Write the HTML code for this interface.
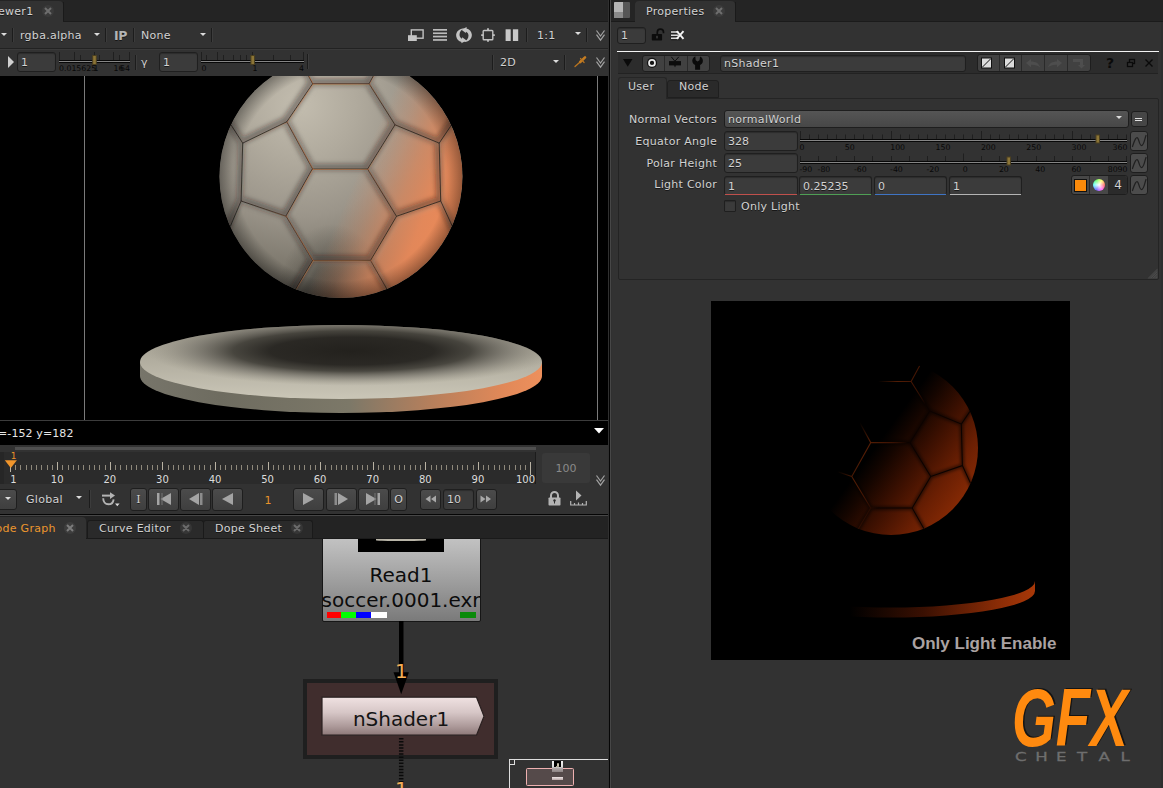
<!DOCTYPE html>
<html>
<head>
<meta charset="utf-8">
<title>Nuke</title>
<style>
html,body{margin:0;padding:0;}
body{width:1163px;height:788px;overflow:hidden;background:#323232;position:relative;font-family:"DejaVu Sans","Liberation Sans",sans-serif;font-size:11px;letter-spacing:0.28px;color:#d2d2d2;}
.abs{position:absolute;}
.t{position:absolute;white-space:nowrap;line-height:14px;text-shadow:0 1px 0 rgba(0,0,0,.55);}
.in{position:absolute;box-sizing:border-box;background:#3b3b3b;border:1px solid #1f1f1f;border-radius:3px;box-shadow:inset 0 1px 1px rgba(0,0,0,.25);}
.btn{position:absolute;box-sizing:border-box;background:linear-gradient(#4b4b4b,#3f3f3f);border:1px solid #1e1e1e;border-radius:3px;}
.sep{position:absolute;width:1px;background:#1c1c1c;box-shadow:1px 0 0 #3c3c3c;}
.dd{position:absolute;width:0;height:0;border-left:3px solid transparent;border-right:3px solid transparent;border-top:3.4px solid #dcdcdc;}
svg{position:absolute;overflow:visible;letter-spacing:0;}
</style>
</head>
<body>

<!-- ================= LEFT: VIEWER ================= -->
<div class="abs" id="vtabbar" style="left:0;top:0;width:609px;height:22px;background:#242424;"></div>
<div class="abs" id="vtab" style="left:-4px;top:1px;width:67px;height:21px;background:#323232;border-radius:0 4px 0 0;"></div>
<div class="abs" style="left:63px;top:2px;width:1px;height:20px;background:#1a1a1a;"></div>
<div class="abs" style="left:63px;top:21px;width:545px;height:1px;background:#1b1b1b;"></div>
<div class="t" style="left:-2px;top:5px;">ewer1</div>
<svg style="left:41px;top:4px;" width="14" height="14" viewBox="0 0 14 14"><circle cx="7" cy="7" r="6" fill="#3a3a3a"/><path d="M4 4l6 6M10 4l-6 6" stroke="#6e6e6e" stroke-width="2"/></svg>

<!-- toolbar rows -->
<div class="abs" style="left:0;top:48px;width:609px;height:1px;background:#222;"></div>
<div class="abs" style="left:0;top:49px;width:609px;height:1px;background:#3a3a3a;"></div>

<div id="tb1">
<!-- row 1 -->
<div class="dd" style="left:0.500px;top:32.500px;"></div>
<div class="sep" style="left:12px;top:28px;height:14px;"></div>
<div class="t" style="left:20px;top:28.800px;">rgba.alpha</div>
<div class="dd" style="left:93.500px;top:32.500px;"></div>
<div class="sep" style="left:105px;top:28px;height:14px;"></div>
<div class="t" style="left:114px;top:28.800px;font-weight:bold;font-size:12.5px;color:#b4b4b4;letter-spacing:-0.5px;">IP</div>
<div class="sep" style="left:133px;top:28px;height:14px;"></div>
<div class="t" style="left:141px;top:28.800px;">None</div>
<div class="dd" style="left:199.500px;top:32.500px;"></div>
<div class="sep" style="left:211px;top:28px;height:14px;"></div>

<!-- right icons row 1 -->
<svg style="left:408px;top:27px;" width="112" height="17" viewBox="408 27 112 17">
  <!-- proxy icon -->
  <rect x="411.300" y="29.900" width="11.800" height="8.300" fill="none" stroke="#c2c2c2" stroke-width="1.400"/>
  <rect x="408" y="35.200" width="8.800" height="5.800" fill="#c4c4c4"/>
  <!-- lines icon -->
  <g fill="#bcbcbc"><rect x="433" y="29" width="14" height="1.700"/><rect x="433" y="32.400" width="14" height="1.700"/><rect x="433" y="35.700" width="14" height="1.700"/><rect x="433" y="39.100" width="14" height="1.700"/></g>
  <!-- refresh icon -->
  <g fill="#c4c4c4">
    <path d="M464.600 28.300C459 28.300 455.700 32 456.200 36.200C456.600 39.200 458.700 41.300 461.500 42L461.300 43.300L466.600 40.600L462.200 37.300L462 38.700C460.400 38 459.500 36.600 459.500 34.800C459.500 31.800 461.500 29.300 464.600 28.300Z"/>
    <path d="M463.400 42.100C469 42.100 472.300 38.400 471.800 34.200C471.400 31.200 469.300 29.100 466.500 28.400L466.700 27.100L461.400 29.800L465.800 33.100L466 31.700C467.600 32.400 468.500 33.800 468.500 35.600C468.500 38.600 466.500 41.100 463.400 42.100Z"/>
  </g>
  <!-- crosshair square -->
  <rect x="483.200" y="30.500" width="9.600" height="9.200" rx="0.800" fill="none" stroke="#c2c2c2" stroke-width="1.400"/>
  <path d="M488 28.300v2M488 39.700v2M481.200 35.100h2M492.800 35.100h2" stroke="#c2c2c2" stroke-width="1.800"/>
  <!-- pause -->
  <rect x="505.600" y="29.300" width="5.100" height="11.700" fill="#c9c9c9"/>
  <rect x="512.900" y="29.300" width="5.300" height="11.700" fill="#c9c9c9"/>
</svg>
<div class="sep" style="left:526px;top:28px;height:14px;"></div>
<div class="t" style="left:537px;top:28.800px;">1:1</div>
<div class="dd" style="left:574.600px;top:32px;"></div>
<div class="sep" style="left:586px;top:28px;height:14px;"></div>
<svg style="left:595.500px;top:30px;" width="9" height="11" viewBox="0 0 9 11"><path d="M0.500 0.500L4.500 6L8.500 0.500M0.500 4.700L4.500 10.200L8.500 4.700" fill="none" stroke="#a2a2a2" stroke-width="1.200"/></svg>
</div>
<div id="tb2">
<!-- row 2 -->
<svg style="left:8px;top:56px;" width="6" height="12" viewBox="0 0 6 12"><path d="M0 0L6 6L0 12Z" fill="#d0d0d0"/></svg>
<div class="in" style="left:17px;top:52px;width:39px;height:20px;"></div>
<div class="t" style="left:21px;top:56px;letter-spacing:0;">1</div>
<svg style="left:58px;top:51px;" width="74" height="22" viewBox="58 51 74 22">
  <path d="M59.500 52v8M74.500 52v8M80.500 55v5M94.500 52v8M99.500 55v5M113.500 52v8M119.500 55v5M129.500 52v8" stroke="#1f1f1f" stroke-width="1"/>
  <rect x="59" y="60" width="71" height="3" fill="#080808"/>
  <rect x="59" y="61" width="71" height="1" fill="#858585"/>
  <rect x="92.700" y="55.500" width="3.600" height="9" fill="#8c7536" stroke="#4a3f20" stroke-width="1"/>
  <g font-family="DejaVu Sans, sans-serif" font-size="7.800" fill="#080808">
    <text x="59" y="71.200">0.015625</text><text x="93.500" y="71.200">1</text><text x="113.500" y="71.200">16</text><text x="130" y="71.200" text-anchor="end">64</text>
  </g>
</svg>
<div class="sep" style="left:135px;top:55px;height:15px;"></div>
<div class="t" style="left:141px;top:56px;">γ</div>
<div class="in" style="left:159px;top:52px;width:39px;height:20px;"></div>
<div class="t" style="left:163px;top:56px;letter-spacing:0;">1</div>
<svg style="left:200px;top:51px;" width="108" height="22" viewBox="200 51 108 22">
  <path d="M201.500 52v8M206.500 55v5M217.500 52v8M223.500 55v5M233.500 55v5M240.500 55v5M246.500 55v5M252.500 52v8M273.500 55v5M290.500 55v5M303.500 52v8" stroke="#1f1f1f" stroke-width="1"/>
  <rect x="201" y="60" width="103" height="3" fill="#080808"/>
  <rect x="201" y="61" width="103" height="1" fill="#858585"/>
  <rect x="250.900" y="55.500" width="3.600" height="9" fill="#8c7536" stroke="#4a3f20" stroke-width="1"/>
  <g font-family="DejaVu Sans, sans-serif" font-size="7.800" fill="#080808">
    <text x="201.500" y="71.200">0</text><text x="252.500" y="71.200">1</text><text x="304" y="71.200" text-anchor="end">4</text>
  </g>
</svg>
<div class="sep" style="left:307px;top:54px;height:15px;"></div>

<div class="sep" style="left:492px;top:55px;height:15px;"></div>
<div class="t" style="left:500px;top:56px;">2D</div>
<div class="dd" style="left:552.500px;top:59.800px;"></div>
<div class="sep" style="left:564px;top:55px;height:15px;"></div>
<svg style="left:574px;top:56px;" width="13" height="12" viewBox="574 56 13 12"><path d="M575 66.600L581 61.200" stroke="#b87420" stroke-width="1.300" stroke-linecap="round"/><path d="M580.200 62L585 57.400" stroke="#c47c22" stroke-width="2.600" stroke-linecap="round"/><path d="M580.600 58.600L584 62.400" stroke="#b87420" stroke-width="1.400" stroke-linecap="round"/></svg>
<svg style="left:595.500px;top:56.800px;" width="9" height="11" viewBox="0 0 9 11"><path d="M0.500 0.500L4.500 6L8.500 0.500M0.500 4.700L4.500 10.200L8.500 4.700" fill="none" stroke="#a2a2a2" stroke-width="1.200"/></svg>
</div>

<!-- viewer -->
<div class="abs" id="viewer" style="left:0;top:76px;width:608px;height:369px;background:#000;"></div>
<div id="viewerimg">
<svg style="left:0;top:76px;" width="608" height="345" viewBox="0 76 608 345">
<defs>
  <clipPath id="vclip"><rect x="0" y="76" width="608" height="345"/></clipPath>
  <clipPath id="ballclip"><circle cx="341" cy="176.5" r="121.5"/></clipPath>
  <radialGradient id="ballbase" cx="300" cy="104" r="225" gradientUnits="userSpaceOnUse">
    <stop offset="0" stop-color="#c3bdaf"/>
    <stop offset="0.25" stop-color="#b0aa9d"/>
    <stop offset="0.5" stop-color="#9b958a"/>
    <stop offset="0.72" stop-color="#7e796e"/>
    <stop offset="0.9" stop-color="#59554e"/>
    <stop offset="1" stop-color="#423f39"/>
  </radialGradient>
  <linearGradient id="ballorange" x1="352" y1="186" x2="455" y2="230" gradientUnits="userSpaceOnUse">
    <stop offset="0" stop-color="#e98a5b" stop-opacity="0"/>
    <stop offset="0.2" stop-color="#e98a5b" stop-opacity="0.25"/>
    <stop offset="0.45" stop-color="#ea8a5a" stop-opacity="0.65"/>
    <stop offset="0.7" stop-color="#ec8a59" stop-opacity="0.92"/>
    <stop offset="1" stop-color="#ee8b58" stop-opacity="1"/>
  </linearGradient>
  <radialGradient id="ballrim" cx="341" cy="176.5" r="121.5" gradientUnits="userSpaceOnUse">
    <stop offset="0.86" stop-color="#000" stop-opacity="0"/>
    <stop offset="1" stop-color="#000" stop-opacity="0.35"/>
  </radialGradient>
  <radialGradient id="balldark" cx="332" cy="296" r="72" gradientUnits="userSpaceOnUse" gradientTransform="translate(332 296) scale(0.75 1) translate(-332 -296)">
    <stop offset="0" stop-color="#2f2d28" stop-opacity="0.6"/>
    <stop offset="0.5" stop-color="#2f2d28" stop-opacity="0.32"/>
    <stop offset="1" stop-color="#2f2d28" stop-opacity="0"/>
  </radialGradient>
  <filter id="b2" x="-20%" y="-20%" width="140%" height="140%"><feGaussianBlur stdDeviation="2.2"/></filter>
  <filter id="b3" x="-20%" y="-20%" width="140%" height="140%"><feGaussianBlur stdDeviation="2.800"/></filter>
  <filter id="b1" x="-20%" y="-20%" width="140%" height="140%"><feGaussianBlur stdDeviation="0.5"/></filter>
  <linearGradient id="seamcol" x1="230" y1="0" x2="460" y2="0" gradientUnits="userSpaceOnUse">
    <stop offset="0.05" stop-color="#e0783c" stop-opacity="0"/><stop offset="0.18" stop-color="#e0783c" stop-opacity="0.15"/><stop offset="0.32" stop-color="#e27a3c" stop-opacity="0.5"/><stop offset="0.55" stop-color="#e27a3c" stop-opacity="0.55"/><stop offset="0.68" stop-color="#d07038" stop-opacity="0.15"/><stop offset="0.78" stop-color="#d07038" stop-opacity="0"/>
  </linearGradient>
  <radialGradient id="discshadow" cx="352" cy="351" r="205" gradientUnits="userSpaceOnUse" gradientTransform="translate(352 351) scale(1 0.17) translate(-352 -351)">
    <stop offset="0" stop-color="#23211d" stop-opacity="1"/>
    <stop offset="0.4" stop-color="#282622" stop-opacity="0.98"/>
    <stop offset="0.58" stop-color="#3a3832" stop-opacity="0.88"/>
    <stop offset="0.78" stop-color="#64615a" stop-opacity="0.5"/>
    <stop offset="1" stop-color="#8a867a" stop-opacity="0"/>
  </radialGradient>
  <linearGradient id="disctop" x1="0" y1="325" x2="0" y2="399" gradientUnits="userSpaceOnUse">
    <stop offset="0" stop-color="#9c988b"/><stop offset="0.45" stop-color="#b0ac9e"/><stop offset="1" stop-color="#cac6b7"/>
  </linearGradient>
  <linearGradient id="discside" x1="140" y1="0" x2="542" y2="0" gradientUnits="userSpaceOnUse">
    <stop offset="0" stop-color="#77756a"/><stop offset="0.2" stop-color="#6e6c60"/><stop offset="0.52" stop-color="#7c7868"/><stop offset="0.72" stop-color="#b57f5c"/><stop offset="0.9" stop-color="#e08858"/><stop offset="1" stop-color="#ee905c"/>
  </linearGradient>
  <linearGradient id="seamcolp" x1="240" y1="150" x2="460" y2="250" gradientUnits="userSpaceOnUse">
    <stop offset="0.2" stop-color="#7a2a06" stop-opacity="0"/><stop offset="0.3" stop-color="#8a3008" stop-opacity="0.6"/><stop offset="0.4" stop-color="#5a1c04" stop-opacity="0.7"/><stop offset="0.5" stop-color="#0c0200" stop-opacity="0.95"/><stop offset="1" stop-color="#0a0200" stop-opacity="1"/>
  </linearGradient>
  <clipPath id="disctopclip"><ellipse cx="341" cy="362" rx="201" ry="37"/></clipPath>
</defs>
<g clip-path="url(#vclip)">
  <!-- disc -->
  <path d="M140 362 L140 376 A201 37 0 0 0 542 376 L542 362 Z" fill="url(#discside)"/>
  <ellipse cx="341" cy="362" rx="201" ry="37" fill="url(#disctop)"/>
  <g clip-path="url(#disctopclip)"><ellipse cx="352" cy="351" rx="205" ry="35" fill="url(#discshadow)"/></g>
  <!-- ball -->
  <circle cx="341" cy="176.5" r="121.5" fill="url(#ballbase)"/>
  <g clip-path="url(#ballclip)">
    <circle cx="341" cy="176.5" r="121.5" fill="url(#balldark)"/>
    <circle cx="341" cy="176.5" r="121.5" fill="url(#ballorange)"/>
    <g id="seams" fill="none" stroke-linejoin="round" stroke-linecap="round">
      <g stroke="#201d19" stroke-opacity="0.45" stroke-width="6.500" filter="url(#b3)" transform="translate(-1.200 -1.500)">
        <path id="sp" d="M312.7 169 L367.6 169 L396.5 216.3 L370.6 260.4 L312.7 260.4 L286.2 216.3 Z M312.7 169 L286.8 121.8 L312.7 83.7 L369.1 83.7 L395 124.8 L367.6 169 M312.7 83.7 L300 60 M369.1 83.7 L382 60 M286.8 121.8 L242.7 143.1 L241.1 201 L286.2 216.3 M395 124.8 L439.2 143.1 L440.7 201 L396.5 216.3 M242.7 143.1 L232 126.4 Q226 118 222 112 M241.1 201 L232 222.3 Q228 232 226 238 M439.2 143.1 L450.5 126.4 L456 117 M440.7 201 L450.5 222.3 L455 232 M312.7 260.4 L299 283.3 L294 292 M370.6 260.4 L382.8 281.8 L388 291"/>
      </g>
      <use href="#sp" transform="translate(1.800 2)" stroke="#ddd6c8" stroke-opacity="0.2" stroke-width="3" filter="url(#b2)"/>
      <use href="#sp" stroke="#26221d" stroke-width="1" stroke-opacity="0.8" filter="url(#b1)"/>
      <use href="#sp" transform="translate(0.600 0.400)" stroke="url(#seamcol)" stroke-width="0.900" filter="url(#b1)"/>
    </g>
    <circle cx="341" cy="176.5" r="121.5" fill="url(#ballrim)"/>
  </g>
  <!-- format lines -->
  <rect x="84" y="76" width="1" height="345" fill="#7a7a7a"/>
  <rect x="597" y="76" width="1" height="345" fill="#7a7a7a"/>
  <rect x="0" y="420" width="608" height="1" fill="#3c3c3c"/>
</g>
</svg>
<div class="t" style="left:-2px;top:426.500px;color:#e6e6e6;text-shadow:none;letter-spacing:0.1px;">=-152 y=182</div>
<svg style="left:594px;top:428px;" width="10" height="6" viewBox="0 0 10 6"><path d="M0 0H10L5 5.5Z" fill="#fff"/></svg>
</div>

<!-- timeline -->
<div id="timeline">
<div class="abs" style="left:0;top:445px;width:608px;height:43px;background:#323232;"></div>
<div class="abs" style="left:0;top:452px;width:536px;height:32px;background:#2b2b2b;"></div>
<div class="abs" style="left:0;top:452px;width:4px;height:32px;background:#262626;"></div>
<div class="abs" style="left:15px;top:447px;width:521px;height:3px;background:#4f4f4f;"></div>
<div class="abs" style="left:535px;top:452px;width:1px;height:32px;background:#1c1c1c;"></div>
<svg style="left:0;top:445px;" width="540" height="43" viewBox="0 445 540 43">
  <path d="M15.5  465v5M20.5  465v5M26.5  465v5M31.5  465v5M36.5  465v5M41.5  465v5M47.5  465v5M52.5  465v5M62.5  465v5M68.5  465v5M73.5  465v5M78.5  465v5M83.5  465v5M89.5  465v5M94.5  465v5M99.5  465v5M105.5  465v5M115.5  465v5M120.5  465v5M126.5  465v5M131.5  465v5M136.5  465v5M141.5  465v5M147.5  465v5M152.5  465v5M157.5  465v5M168.5  465v5M173.5  465v5M178.5  465v5M183.5  465v5M189.5  465v5M194.5  465v5M199.5  465v5M204.5  465v5M210.5  465v5M220.5  465v5M225.5  465v5M231.5  465v5M236.5  465v5M241.5  465v5M247.5  465v5M252.5  465v5M257.5  465v5M262.5  465v5M273.5  465v5M278.5  465v5M283.5  465v5M289.5  465v5M294.5  465v5M299.5  465v5M304.5  465v5M310.5  465v5M315.5  465v5M325.5  465v5M331.5  465v5M336.5  465v5M341.5  465v5M346.5  465v5M352.5  465v5M357.5  465v5M362.5  465v5M367.5  465v5M378.5  465v5M383.5  465v5M389.5  465v5M394.5  465v5M399.5  465v5M404.5  465v5M410.5  465v5M415.5  465v5M420.5  465v5M431.5  465v5M436.5  465v5M441.5  465v5M446.5  465v5M452.5  465v5M457.5  465v5M462.5  465v5M467.5  465v5M473.5  465v5M483.5  465v5M488.5  465v5M494.5  465v5M499.5  465v5M504.5  465v5M509.5  465v5M515.5  465v5M520.5  465v5M525.5  465v5" stroke="#8f897c" stroke-width="1" fill="none"/>
  <path d="M57.5 462v8M110.5 462v8M162.5 462v8M215.5 462v8M268.5 462v8M320.5 462v8M373.5 462v8M425.5 462v8M478.5 462v8" stroke="#b9b2a3" stroke-width="1" fill="none"/>
  <path d="M530.5 462v13" stroke="#b9b2a3" stroke-width="1"/>
  <path d="M10.500 466v6" stroke="#b9b2a3" stroke-width="1"/>
  <path d="M4.800 460.300H16.900L10.800 468Z" fill="#f0952b"/>
  <g font-family="DejaVu Sans, sans-serif" font-size="10" fill="#dcdcdc"><text x="13.400" y="483" text-anchor="middle">1</text><text x="57.2" y="483" text-anchor="middle">10</text><text x="109.8" y="483" text-anchor="middle">20</text><text x="162.4" y="483" text-anchor="middle">30</text><text x="215.0" y="483" text-anchor="middle">40</text><text x="267.6" y="483" text-anchor="middle">50</text><text x="320.1" y="483" text-anchor="middle">60</text><text x="372.7" y="483" text-anchor="middle">70</text><text x="425.3" y="483" text-anchor="middle">80</text><text x="477.9" y="483" text-anchor="middle">90</text><text x="535" y="483" text-anchor="end">100</text></g>
  <text x="13.600" y="459" text-anchor="middle" font-family="DejaVu Sans, sans-serif" font-size="9" fill="#e8922a">1</text>
</svg>
<div class="abs" style="left:542px;top:453px;width:48px;height:30px;background:#393939;border-radius:3px;"></div>
<div class="t" style="left:542px;top:462px;width:48px;text-align:center;color:#8a8a8a;text-shadow:none;font-size:11px;letter-spacing:0;">100</div>
<svg style="left:595.500px;top:474.600px;" width="9" height="11" viewBox="0 0 9 11"><path d="M0.500 0.500L4.500 6L8.500 0.500M0.500 4.700L4.500 10.200L8.500 4.700" fill="none" stroke="#a2a2a2" stroke-width="1.200"/></svg>
</div>
<div id="playback">
<div class="btn" style="left:-3px;top:489px;width:20px;height:21px;"></div>
<div class="dd" style="left:5px;top:497px;"></div>
<div class="t" style="left:26px;top:492.500px;">Global</div>
<div class="dd" style="left:75.800px;top:496.300px;"></div>
<div class="sep" style="left:89px;top:490px;height:18px;"></div>
<svg style="left:101px;top:491px;" width="22" height="17" viewBox="101 491 22 17">
  <path d="M102 495.600h9.500" stroke="#b4b4b4" stroke-width="2" fill="none"/>
  <path d="M110 492.300L115 495.600L110 498.900Z" fill="#b4b4b4"/>
  <path d="M103.200 498.300C103.200 502 105.500 504.300 108.300 504.300C111 504.300 113.300 502.500 113.600 499.300" stroke="#b4b4b4" stroke-width="1.900" fill="none"/>
  <path d="M115 503.500h4.600l-2.300 2.700z" fill="#dcdcdc"/>
</svg>
<div class="btn" style="left:130px;top:487.500px;width:17px;height:23px;"></div>
<div class="t" style="left:130px;top:493px;width:17px;text-align:center;font-family:'DejaVu Serif',serif;font-size:11px;letter-spacing:0;">I</div>
<div class="btn" style="left:148px;top:487.500px;width:31px;height:23px;"></div>
<div class="btn" style="left:180px;top:487.500px;width:31px;height:23px;"></div>
<div class="btn" style="left:212px;top:487.500px;width:31px;height:23px;"></div>
<div class="btn" style="left:293px;top:487.500px;width:31px;height:23px;"></div>
<div class="btn" style="left:326px;top:487.500px;width:31px;height:23px;"></div>
<div class="btn" style="left:358px;top:487.500px;width:31px;height:23px;"></div>
<div class="btn" style="left:390px;top:487.500px;width:17px;height:23px;"></div>
<div class="t" style="left:390px;top:493px;width:17px;text-align:center;font-size:11px;letter-spacing:0;">O</div>
<svg style="left:148px;top:488px;" width="260" height="22" viewBox="148 488 260 22" fill="#a4a4a4">
  <!-- |< -->
  <rect x="157" y="493" width="2.5" height="12"/><path d="M171 493v12l-10.5-6z"/><path d="M162 493v12" stroke="#777" stroke-width="1"/>
  <!-- <| -->
  <path d="M199 493v12l-10-6z"/><rect x="200" y="493" width="2.5" height="12" fill="#8c8c8c"/>
  <!-- < -->
  <path d="M233 493v12l-11-6z"/>
  <!-- > -->
  <path d="M303 493v12l11-6z"/>
  <!-- |> -->
  <rect x="334.5" y="493" width="2.5" height="12" fill="#8c8c8c"/><path d="M338 493v12l10-6z"/>
  <!-- >| -->
  <path d="M366 493v12l10.5-6z"/><rect x="377.5" y="493" width="2.5" height="12"/><path d="M375 493v12" stroke="#777" stroke-width="1"/>
</svg>
<div class="t" style="left:243px;top:493.500px;width:50px;text-align:center;color:#e8922a;text-shadow:none;font-size:11px;letter-spacing:0;">1</div>
<div class="btn" style="left:420px;top:489px;width:21px;height:21px;"></div>
<div class="in" style="left:443px;top:489px;width:31px;height:21px;"></div>
<div class="t" style="left:447px;top:493px;letter-spacing:0;">10</div>
<div class="btn" style="left:476px;top:489px;width:21px;height:21px;"></div>
<svg style="left:420px;top:489px;" width="80" height="21" viewBox="420 489 80 21" fill="#a8a8a8">
  <path d="M430.5 495.5v7l-5-3.5zM436 495.5v7l-5-3.500z"/>
  <path d="M480.500 495.500v7l5-3.500zM486 495.500v7l5-3.500z"/>
</svg>
<!-- lock -->
<svg style="left:548px;top:491px;" width="13" height="15" viewBox="0 0 13 15">
  <path d="M3 7V4.500A3.500 3.500 0 0 1 10 4.500V7" fill="none" stroke="#b4b4b4" stroke-width="2"/>
  <rect x="0.500" y="6.500" width="12" height="8" rx="0.800" fill="#b4b4b4"/>
  <circle cx="6.500" cy="9.500" r="1.200" fill="#2e2e2e"/><rect x="6" y="9.500" width="1" height="3" fill="#2e2e2e"/>
</svg>
<!-- marker -->
<svg style="left:570px;top:490px;" width="17" height="16" viewBox="0 0 17 16">
  <path d="M6 0.500L11.500 5.500L6 10.500Z" fill="#b4b4b4"/>
  <path d="M0.700 11v4h15.600v-4M4.500 13v2M8.500 12.500v2.500M12.500 13v2" fill="none" stroke="#b4b4b4" stroke-width="1.200"/>
</svg>
</div>

<!-- node graph -->
<div id="ngtabs">
<div class="abs" style="left:0;top:513.800px;width:608px;height:1.200px;background:#050505;"></div>
<div class="abs" style="left:0;top:515px;width:608px;height:1.300px;background:#474747;"></div>
<div class="abs" style="left:0;top:516.300px;width:608px;height:22.700px;background:#232323;"></div>
<div class="abs" style="left:-4px;top:517px;width:90px;height:22px;background:#323232;border-radius:0 4px 0 0;"></div>
<div class="abs" style="left:87px;top:520px;width:117px;height:19px;background:#2a2a2a;border:1px solid #1a1a1a;border-bottom:none;box-sizing:border-box;border-radius:3px 3px 0 0;"></div>
<div class="abs" style="left:203px;top:520px;width:110px;height:19px;background:#2a2a2a;border:1px solid #1a1a1a;border-bottom:none;box-sizing:border-box;border-radius:3px 3px 0 0;"></div>
<div class="abs" style="left:86px;top:538px;width:522px;height:1px;background:#1a1a1a;"></div>
<div class="t" style="left:-4.500px;top:521.500px;color:#ec962e;text-shadow:none;">ode Graph</div>
<div class="t" style="left:99px;top:521.500px;">Curve Editor</div>
<div class="t" style="left:215px;top:521.500px;">Dope Sheet</div>
<svg style="left:0;top:516px;" width="320" height="23" viewBox="0 516 320 23">
  <g fill="#3d3d3d"><circle cx="70" cy="528" r="6"/><circle cx="186" cy="528" r="6" fill="#363636"/><circle cx="297" cy="528" r="6" fill="#363636"/></g>
  <g stroke="#7c7c7c" stroke-width="2" fill="none"><path d="M67 525l6 6M73 525l-6 6"/></g>
  <g stroke="#6a6a6a" stroke-width="2" fill="none"><path d="M183 525l6 6M189 525l-6 6M294 525l6 6M300 525l-6 6"/></g>
</svg>
</div>
<div id="nodegraph">
<div class="abs" style="left:0;top:539px;width:608px;height:249px;overflow:hidden;">
 <div class="abs" style="left:0;top:-539px;width:608px;height:788px;">
  <!-- Read1 -->
  <div class="abs" style="left:321.500px;top:520px;width:159px;height:101.500px;box-sizing:border-box;border:1.200px solid #161616;border-radius:2px;background:linear-gradient(#cfcfcf 0%,#bcbcbc 25%,#9a9a9a 65%,#7a7a7a 100%);overflow:hidden;">
  </div>
  <div class="abs" style="left:358px;top:530px;width:86px;height:22px;background:#000;"></div>
  <div class="abs" style="left:376px;top:539px;width:50px;height:2px;background:#b9b5a8;border-radius:0 0 40% 40%;"></div>
  <div class="abs" style="left:322px;top:563px;width:158px;height:50px;overflow:hidden;color:#0c0c0c;font-size:20px;letter-spacing:0;text-align:center;">
    <div style="position:absolute;left:-20px;width:198px;top:0;line-height:24px;white-space:nowrap;">Read1</div>
    <div style="position:absolute;left:-20px;width:198px;top:25px;line-height:24px;white-space:nowrap;">soccer.0001.exr</div>
  </div>
  <div class="abs" style="left:327px;top:612px;width:14px;height:6px;background:#f00;"></div>
  <div class="abs" style="left:341px;top:612px;width:15px;height:6px;background:#0f0;"></div>
  <div class="abs" style="left:356px;top:612px;width:15px;height:6px;background:#00f;"></div>
  <div class="abs" style="left:371px;top:612px;width:16px;height:6px;background:#fff;"></div>
  <div class="abs" style="left:460px;top:612px;width:16px;height:6px;background:#0a8a0a;"></div>
  <!-- backdrop -->
  <div class="abs" style="left:303px;top:679px;width:195px;height:80px;box-sizing:border-box;background:#402d2d;border:4px solid #1f1f1f;"></div>
  <svg style="left:300px;top:620px;" width="200" height="168" viewBox="300 620 200 168">
    <defs><linearGradient id="nsg" x1="0" y1="697" x2="0" y2="736" gradientUnits="userSpaceOnUse">
      <stop offset="0" stop-color="#f0e2e2"/><stop offset="0.4" stop-color="#d6c6c6"/><stop offset="0.75" stop-color="#ad9a9a"/><stop offset="1" stop-color="#8a7575"/></linearGradient></defs>
    <rect x="399" y="621" width="4.500" height="58" fill="#000"/>
    <path d="M393.500 672.300H408.900L401.200 694.300Z" fill="#000"/>
    <path d="M322 697.200H476.500L484 716.200L476.500 735.200H322Z" fill="url(#nsg)" stroke="#2a2020" stroke-width="1.200"/>
    <path d="M401.200 738V782" stroke="#0a0a0a" stroke-width="4.500" stroke-dasharray="1.500 1.570"/>
    <g font-family="DejaVu Sans, sans-serif" font-size="20" fill="#141414" text-anchor="middle"><text x="401" y="725.500">nShader1</text></g>
    <g font-family="DejaVu Sans, sans-serif" font-size="20" fill="#f5ae55" text-anchor="middle"><text x="401.300" y="677.500">1</text><text x="401.300" y="796">1</text></g>
  </svg>
  <!-- minimap -->
  <div class="abs" style="left:509px;top:759px;width:110px;height:40px;box-sizing:border-box;border:1px solid #dedede;"></div>
  <div class="abs" style="left:509px;top:759px;width:5.500px;height:5.500px;box-sizing:border-box;border:1px solid #dedede;"></div>
  <div class="abs" style="left:526px;top:767.500px;width:48px;height:18px;box-sizing:border-box;border:1px solid #eeb0b0;background:#554a4a;border-radius:1.500px;"></div>
  <div class="abs" style="left:552px;top:761px;width:11px;height:11px;background:linear-gradient(#f4f4f4 0,#d8d8d8 58%,#b4acac 60%,#8c8383 100%);"></div>
  <div class="abs" style="left:554px;top:761px;width:7px;height:6px;background:#000;"></div>
  <div class="abs" style="left:556.500px;top:763px;width:2.500px;height:2.500px;background:#c9c3b0;border-radius:1px 1px 0 0;"></div>
  <div class="abs" style="left:556px;top:766px;width:3px;height:1px;background:#a9a390;"></div>
  <div class="abs" style="left:552px;top:777px;width:11px;height:3px;background:linear-gradient(#efe6e6,#b5a5a5);"></div>
 </div>
</div>
</div>

<!-- splitter -->
<div class="abs" style="left:608px;top:0;width:4px;height:788px;background:#303030;"></div>
<div class="abs" style="left:609px;top:0;width:1px;height:788px;background:#060606;"></div>
<div class="abs" style="left:610px;top:0;width:1.300px;height:788px;background:#474747;"></div>

<!-- ================= RIGHT: PROPERTIES ================= -->
<div id="props">
<div class="abs" style="left:611.300px;top:0;width:552px;height:22px;background:#242424;"></div>
<div class="abs" style="left:1160.500px;top:22px;width:3px;height:766px;background:#2e2e2e;"></div>
<!-- pane icon -->
<div class="abs" style="left:614px;top:2px;width:16px;height:16px;background:#565656;border-radius:1px;"></div>
<div class="abs" style="left:614px;top:2px;width:8.600px;height:9.600px;background:#b6b6b6;border-radius:1px 0 0 0;"></div>
<div class="abs" style="left:614px;top:11.600px;width:8.600px;height:6.400px;background:#8a8a8a;"></div>
<div class="abs" style="left:635px;top:1px;width:100px;height:21px;background:#323232;border-radius:4px 4px 0 0;"></div>
<div class="abs" style="left:734.500px;top:2px;width:1px;height:20px;background:#1a1a1a;"></div>
<div class="abs" style="left:735px;top:21px;width:428px;height:1px;background:#1b1b1b;"></div>
<div class="abs" style="left:611.300px;top:21px;width:24px;height:1px;background:#1b1b1b;"></div>
<div class="t" style="left:646px;top:5px;">Properties</div>
<svg style="left:712px;top:4px;" width="14" height="14" viewBox="0 0 14 14"><circle cx="7" cy="7" r="6" fill="#3b3b3b"/><path d="M4 4l6 6M10 4l-6 6" stroke="#6e6e6e" stroke-width="2"/></svg>

<div class="in" style="left:616.500px;top:26.500px;width:29px;height:17px;"></div>
<div class="t" style="left:621px;top:29px;letter-spacing:0;">1</div>
<!-- unlock icon -->
<svg style="left:651px;top:28px;" width="15" height="14" viewBox="651 28 15 14">
  <path d="M657.300 34.500V32.300A3.100 3.100 0 0 1 663.500 32.300V33.300" fill="none" stroke="#0c0c0c" stroke-width="1.700"/>
  <rect x="651.800" y="34" width="10.300" height="6.600" rx="0.800" fill="#0c0c0c"/>
  <rect x="656.500" y="35.800" width="1" height="2.600" fill="#555"/>
</svg>
<!-- clear icon -->
<svg style="left:670px;top:29px;" width="16" height="13" viewBox="670 29 16 13">
  <rect x="670.500" y="30" width="10.700" height="10.500" rx="1.500" fill="#242424"/>
  <path d="M671 32.100h7.600M671 35.300h7.600M671 38.200h7.600" stroke="#dadada" stroke-width="1.500"/>
  <path d="M676.700 31.200l6.800 7.600M683.500 31.200l-6.800 7.600" stroke="#f4f4f4" stroke-width="1.900"/>
</svg>

<!-- node panel -->

<div class="abs" style="left:617px;top:50.500px;width:542px;height:1.500px;background:#f4f4f4;"></div>
<div class="abs" style="left:618px;top:52px;width:540px;height:21.500px;background:#2c2c2c;border-bottom:1px solid #222;box-sizing:border-box;"></div>
<svg style="left:623px;top:58.500px;" width="9.500" height="7.800" viewBox="0 0 10 8"><path d="M0 0H10L5 8Z" fill="#0a0a0a"/></svg>
<div class="btn" style="left:641.500px;top:54.500px;width:68px;height:17px;background:#414141;"></div>
<div class="abs" style="left:664px;top:56px;width:1px;height:15px;background:#2a2a2a;"></div>
<div class="abs" style="left:687px;top:56px;width:1px;height:15px;background:#2a2a2a;"></div>
<svg style="left:642px;top:55px;" width="68" height="17" viewBox="642 55 68 17">
  <circle cx="652" cy="62.900" r="5.100" fill="#141414"/><circle cx="652" cy="62.900" r="3" fill="none" stroke="#ececec" stroke-width="1.700"/>
  <path d="M669 61.100h12v4.300h-12z" fill="#0c0c0c"/><path d="M671.300 56.800l3.600 4.500l3.900-4.500" fill="none" stroke="#0c0c0c" stroke-width="1"/><path d="M673.800 65.300h2.400l-1.200 1.900z" fill="#0c0c0c"/>
  <path d="M695.300 56.200c-2.600 1.300-3.600 4-2.700 6.300c.5 1.200 1.400 2 2.500 2.500v4.700h5v-4.700c1.100-.5 2-1.300 2.500-2.500c.9-2.300-.1-5-2.500-6.100l-.6 3.800l-1.900 1.300l-1.900-1.300z" fill="#0a0a0a"/>
</svg>
<div class="in" style="left:720px;top:54.500px;width:246px;height:17px;"></div>
<div class="t" style="left:724px;top:57px;">nShader1</div>
<div class="btn" style="left:977px;top:54px;width:114px;height:18px;background:#414141;"></div>
<div class="abs" style="left:999px;top:55px;width:1px;height:16px;background:#2a2a2a;"></div>
<div class="abs" style="left:1021px;top:55px;width:1px;height:16px;background:#2a2a2a;"></div>
<div class="abs" style="left:1044px;top:55px;width:1px;height:16px;background:#2a2a2a;"></div>
<div class="abs" style="left:1067px;top:55px;width:1px;height:16px;background:#2a2a2a;"></div>
<svg style="left:977px;top:54px;" width="186" height="18" viewBox="977 54 186 18">
  <rect x="981.500" y="58" width="10" height="10" fill="#dcdcdc" stroke="#111" stroke-width="1"/><path d="M982 67.500L991 58.500" stroke="#111" stroke-width="1"/>
  <rect x="1004.500" y="58" width="10" height="10" fill="#dcdcdc" stroke="#111" stroke-width="1"/><path d="M1005 67.500L1014 58.500" stroke="#111" stroke-width="1"/>
  <g fill="#4e4e4e">
    <path d="M1026 63l5-4v2.500c5 0 8 2 9 6c-2-2-5-3-9-2.800v2.500z"/>
    <path d="M1062 63l-5-4v2.500c-5 0-8 2-9 6c2-2 5-3 9-2.800v2.500z"/>
    <path d="M1073 59h10v6h2l-3.500 3.500l-3.500-3.500h2v-3h-7z"/>
  </g>
  <g stroke="#0a0a0a" stroke-width="1.400" fill="none"><path d="M1145.500 59.500l7 7M1152.500 59.500l-7 7"/></g>
  <g stroke="#0a0a0a" stroke-width="1.300" fill="none"><rect x="1129.500" y="59.500" width="5" height="4"/><rect x="1127.500" y="62.500" width="5" height="4" fill="#2f2f2f"/></g>
</svg>
<div class="t" style="left:1106px;top:56px;font-weight:bold;color:#0a0a0a;text-shadow:none;font-size:14px;">?</div>

<!-- tabs -->
<div class="abs" style="left:667px;top:79.500px;width:52px;height:18.500px;box-sizing:border-box;background:#2a2a2a;border:1px solid #1f1f1f;border-radius:3px 3px 0 0;"></div>
<div class="abs" style="left:617.500px;top:98px;width:541.500px;height:182px;box-sizing:border-box;border:1.200px solid #242424;border-radius:0 2px 2px 2px;"></div>
<div class="abs" style="left:618px;top:76.500px;width:49px;height:22.500px;box-sizing:border-box;background:#323232;border:1px solid #262626;border-bottom:none;border-radius:3px 3px 0 0;"></div>
<div class="t" style="left:628px;top:80px;">User</div>
<div class="t" style="left:679px;top:80px;">Node</div>

<!-- row 1 -->
<div class="t" style="left:517px;width:200px;text-align:right;top:112.500px;">Normal Vectors</div>
<div class="btn" style="left:724px;top:109.500px;width:405px;height:18.500px;background:linear-gradient(#555,#474747);"></div>
<div class="t" style="left:728px;top:112.500px;">normalWorld</div>
<div class="dd" style="left:1116px;top:116px;border-left-width:3.500px;border-right-width:3.500px;border-top-width:3.500px;"></div>
<div class="btn" style="left:1131px;top:111px;width:17px;height:16px;background:#464646;"></div>
<div class="abs" style="left:1135.300px;top:117.800px;width:7px;height:1.100px;background:#e0e0e0;"></div>
<div class="abs" style="left:1135.300px;top:120.300px;width:7px;height:1.100px;background:#e0e0e0;"></div>
<!-- row 2 -->
<div class="t" style="left:517px;width:200px;text-align:right;top:134.500px;">Equator Angle</div>
<div class="in" style="left:724px;top:131px;width:74px;height:20px;"></div>
<div class="t" style="left:728px;top:135px;letter-spacing:0;">328</div>
<!-- row 3 -->
<div class="t" style="left:517px;width:200px;text-align:right;top:156.500px;">Polar Height</div>
<div class="in" style="left:724px;top:153px;width:74px;height:20px;"></div>
<div class="t" style="left:728px;top:157px;letter-spacing:0;">25</div>
<svg style="left:799px;top:129px;" width="330" height="46" viewBox="799 129 330 46">
  <path d="M800.5 131v8M809.5 134.5v4.5M818.5 134.5v4.5M827.5 134.5v4.5M836.5 134.5v4.5M845.5 134.5v4.5M854.5 134.5v4.5M863.5 134.5v4.5M872.5 134.5v4.5M882.5 134.5v4.5M891.5 131v8M900.5 134.5v4.5M909.5 134.5v4.5M918.5 134.5v4.5M927.5 134.5v4.5M936.5 134.5v4.5M945.5 134.5v4.5M954.5 134.5v4.5M963.5 134.5v4.5M972.5 134.5v4.5M981.5 131v8M990.5 134.5v4.5M999.5 134.5v4.5M1009.5 134.5v4.5M1018.5 134.5v4.5M1027.5 134.5v4.5M1036.5 134.5v4.5M1045.5 134.5v4.5M1054.5 134.5v4.5M1063.5 134.5v4.5M1072.5 131v8M1081.5 134.5v4.5M1090.5 134.5v4.5M1099.5 134.5v4.5M1108.5 134.5v4.5M1117.5 134.5v4.5M1126.5 134.5v4.5M800.5 156v5M818.5 156v5M836.5 156v5M854.5 156v5M872.5 156v5M891.5 156v5M909.5 156v5M927.5 156v5M945.5 156v5M963.5 153.5v7.5M981.5 156v5M999.5 156v5M1017.5 156v5M1036.5 156v5M1054.5 156v5M1072.5 156v5M1090.5 156v5M1108.5 156v5M1126.5 156v5" stroke="#1f1f1f" stroke-width="1" fill="none"/>
  <rect x="800" y="139" width="327" height="3" fill="#080808"/><rect x="800" y="140" width="327" height="1" fill="#858585"/>
  <rect x="800" y="161" width="327" height="3" fill="#080808"/><rect x="800" y="162" width="327" height="1" fill="#858585"/>
  <rect x="1096" y="135" width="3.500" height="8" fill="#8c7536" stroke="#4d4120" stroke-width="1"/>
  <rect x="1007" y="157" width="3.500" height="8" fill="#8c7536" stroke="#4d4120" stroke-width="1"/>
  <g font-family="DejaVu Sans, sans-serif" font-size="7.800" fill="#080808"><text x="799.5" y="150.3">0</text><text x="844.8" y="150.3">50</text><text x="890.2" y="150.3">100</text><text x="935.6" y="150.3">150</text><text x="980.9" y="150.3">200</text><text x="1026.3" y="150.3">250</text><text x="1071.6" y="150.3">300</text><text x="1127.5" y="150.3" text-anchor="end">360</text><text x="799.5" y="172.3">-90</text><text x="817.6" y="172.3">-80</text><text x="853.9" y="172.3">-60</text><text x="890.1" y="172.3">-40</text><text x="926.4" y="172.3">-20</text><text x="962.7" y="172.3">0</text><text x="998.9" y="172.3">20</text><text x="1035.2" y="172.3">40</text><text x="1071.4" y="172.3">60</text><text x="1107.7" y="172.3">80</text><text x="1127.5" y="172.3" text-anchor="end">90</text></g>
</svg>
<div class="btn" style="left:1130px;top:131px;width:18px;height:20px;background:#4c4c4c;"></div>
<div class="btn" style="left:1130px;top:153px;width:18px;height:20px;background:#4c4c4c;"></div>
<div class="btn" style="left:1130px;top:175px;width:18px;height:20px;background:#4c4c4c;"></div>
<svg style="left:1130px;top:131px;" width="18" height="64" viewBox="1130 131 18 64">
  <path d="M1132.5 146.5c1.5-4 2.5-9 4.5-9s2 8 4.500 8s3-6 4.500-10" fill="none" stroke="#202020" stroke-width="1.250" stroke-linecap="round"/><path d="M1132.5 168.5c1.5-4 2.5-9 4.5-9s2 8 4.500 8s3-6 4.500-10" fill="none" stroke="#202020" stroke-width="1.250" stroke-linecap="round"/><path d="M1132.5 190.5c1.5-4 2.5-9 4.5-9s2 8 4.500 8s3-6 4.500-10" fill="none" stroke="#202020" stroke-width="1.250" stroke-linecap="round"/>
</svg>
<!-- row 4 -->
<div class="t" style="left:517px;width:200px;text-align:right;top:177.500px;">Light Color</div>
<div class="in" style="left:724px;top:176px;width:74px;height:19px;border-bottom:none;"></div>
<div class="in" style="left:799px;top:176px;width:73px;height:19px;border-bottom:none;"></div>
<div class="in" style="left:874px;top:176px;width:73px;height:19px;border-bottom:none;"></div>
<div class="in" style="left:949px;top:176px;width:73px;height:19px;border-bottom:none;"></div>
<div class="abs" style="left:725px;top:193.500px;width:72px;height:1.500px;background:#c0504c;"></div>
<div class="abs" style="left:800px;top:193.500px;width:71px;height:1.500px;background:#4f9f55;"></div>
<div class="abs" style="left:875px;top:193.500px;width:71px;height:1.500px;background:#3f74c4;"></div>
<div class="abs" style="left:950px;top:193.500px;width:71px;height:1.500px;background:#b4b4b4;"></div>
<div class="t" style="left:728px;top:179.700px;letter-spacing:0;">1</div>
<div class="t" style="left:803px;top:179.700px;letter-spacing:0;">0.25235</div>
<div class="t" style="left:878px;top:179.700px;letter-spacing:0;">0</div>
<div class="t" style="left:953px;top:179.700px;letter-spacing:0;">1</div>
<div class="btn" style="left:1071px;top:175px;width:57px;height:20px;background:#474747;"></div>
<div class="abs" style="left:1109px;top:176px;width:18px;height:18px;background:#2b2b2b;border-radius:0 2px 2px 0;"></div>
<div class="abs" style="left:1089px;top:176px;width:1px;height:18px;background:#2a2a2a;"></div>
<div class="abs" style="left:1108px;top:176px;width:1px;height:18px;background:#2a2a2a;"></div>
<div class="abs" style="left:1074px;top:179px;width:13px;height:13px;box-sizing:border-box;background:#fb8a0a;border:1px solid #111;"></div>
<div class="abs" style="left:1093px;top:179px;width:12px;height:12px;border-radius:50%;background:radial-gradient(circle at 50% 50%,#fff 0,rgba(255,255,255,0) 70%),conic-gradient(from 90deg,#f66,#f6f,#66f,#6ff,#6f6,#ff6,#f66);"></div>
<div class="t" style="left:1109px;top:178px;width:18px;text-align:center;font-size:12px;letter-spacing:0;">4</div>
<!-- row 5 -->
<div class="in" style="left:724px;top:200px;width:12px;height:12px;border-radius:1px;"></div>
<div class="t" style="left:741px;top:199.700px;">Only Light</div>
<!-- grip -->
<svg style="left:1147px;top:268px;" width="11" height="11" viewBox="0 0 11 11"><path d="M0.500 10.500L10.500 0.500V10.500Z" fill="#4a4a4a"/><path d="M2 10.500L10.500 2M4.500 10.500L10.500 4.500M7 10.500L10.500 7" stroke="#3a3a3a" stroke-width="0.800"/></svg>
</div>
<div id="preview">
<div class="abs" style="left:711px;top:301px;width:359px;height:359px;background:#000;"></div>
<svg style="left:711px;top:301px;" width="359" height="359" viewBox="711 301 359 359">
<defs>
  <clipPath id="pballclip"><circle cx="891" cy="448" r="87"/></clipPath>
  <linearGradient id="plit" x1="884" y1="435" x2="972" y2="499" gradientUnits="userSpaceOnUse">
    <stop offset="0" stop-color="#000"/>
    <stop offset="0.15" stop-color="#140500"/>
    <stop offset="0.4" stop-color="#3c1001"/>
    <stop offset="0.7" stop-color="#6a1f03"/>
    <stop offset="1" stop-color="#8c2c05"/>
  </linearGradient>
  <linearGradient id="pseam" x1="830" y1="0" x2="980" y2="0" gradientUnits="userSpaceOnUse">
    <stop offset="0" stop-color="#7a2a06" stop-opacity="0.3"/><stop offset="0.25" stop-color="#9a3608" stop-opacity="0.9"/><stop offset="0.5" stop-color="#2a0c00" stop-opacity="0.9"/><stop offset="1" stop-color="#1a0600" stop-opacity="1"/>
  </linearGradient>
  <linearGradient id="pdisc" x1="850" y1="0" x2="1035" y2="0" gradientUnits="userSpaceOnUse">
    <stop offset="0" stop-color="#000"/><stop offset="0.4" stop-color="#3a1002"/><stop offset="0.8" stop-color="#8a2c06"/><stop offset="1" stop-color="#a83808"/>
  </linearGradient>
  <clipPath id="pdiscclip"><path d="M747 581 A144 26.500 0 0 0 1035 581 L1035 591 A144 26.500 0 0 1 747 591Z"/></clipPath>
</defs>
  <circle cx="891" cy="448" r="87" fill="url(#plit)"/>
  <g clip-path="url(#pballclip)" fill="none">
    <g transform="translate(891 448) scale(0.716) translate(-341 -176.500)">
      <use href="#sp" stroke="#000" stroke-opacity="0.5" stroke-width="6" filter="url(#b2)"/>
    </g>
    <g transform="translate(891 448) scale(0.716) translate(-341 -176.500)">
      <use href="#sp" stroke="url(#seamcolp)" stroke-width="1.500"/>
    </g>
  </g>
  <!-- disc lit edge -->
  <path d="M747 581 A144 26.500 0 0 0 1035 581 L1035 591 A144 26.500 0 0 1 747 591Z" fill="url(#pdisc)"/>
  <text x="1056.500" y="648.600" text-anchor="end" font-family="Liberation Sans, sans-serif" font-weight="bold" font-size="17" fill="#aaa2a2">Only Light Enable</text>
</svg>
</div>
<div id="logo">
<svg style="left:1010px;top:685px;" width="130" height="80" viewBox="1010 685 130 80">
  <g font-family="Liberation Sans, sans-serif" font-weight="bold" font-style="italic" font-size="80">
    <text x="0" y="0" transform="translate(1013.500 744.500) scale(0.705 1.02)" fill="#141414">GFX</text>
    <text x="0" y="0" transform="translate(1012 746) scale(0.705 1.02)" fill="#ff8a0f">GFX</text>
  </g>
  <text transform="scale(1.28 1)" x="792.9 808.8 825.0 841.4 858.3 875.4" y="760.700" font-family="DejaVu Sans, sans-serif" font-size="13" fill="#6e6e6e" stroke="#6e6e6e" stroke-width="0.300">CHETAL</text>
</svg>
</div>

</body>
</html>
